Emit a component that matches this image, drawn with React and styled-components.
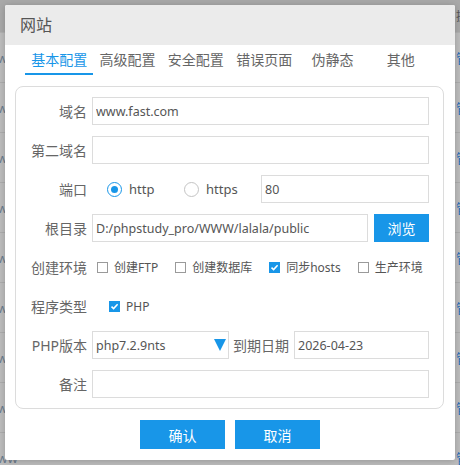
import React, { useState } from "react";
import styled, { createGlobalStyle } from "styled-components";

const BLUE = "#1896e8";

const GlobalStyle = createGlobalStyle`
  body {
    margin: 0;
    font-family: "Noto Sans", "Noto Sans CJK SC", sans-serif;
  }
  * { box-sizing: border-box; }
`;

const Backdrop = styled.div`
  position: relative;
  width: 460px;
  height: 465px;
  overflow: hidden;
  background: #bcbcbc;
`;

const TableHead = styled.div`
  height: 33px;
  background: #a8a8a8;
  border-bottom: 1px solid #b0b0b0;
  display: flex;
  justify-content: flex-end;
  align-items: center;
  span {
    font-size: 12px;
    color: #555;
    margin-right: -8px;
  }
`;

const TableRow = styled.div`
  height: 50px;
  border-bottom: 1px solid #acacac;
  display: flex;
  align-items: center;
  justify-content: space-between;
  font-size: 13px;
  .site {
    color: #6b7a8c;
    margin-left: -13px;
  }
  .act {
    color: #2a6fb8;
    margin-right: -9px;
  }
`;

const Dialog = styled.div`
  position: absolute;
  left: 5px;
  top: 5px;
  width: 450px;
  height: 455px;
  background: #fff;
  border-radius: 2px;
  box-shadow: 0 1px 6px rgba(0, 0, 0, 0.2);
  overflow: hidden;
`;

const Header = styled.div`
  height: 40px;
  line-height: 40px;
  padding-left: 15px;
  background: #ebebeb;
  font-size: 16px;
  color: #555;
`;

const Tabs = styled.div`
  display: flex;
  margin: 0 20px;
  height: 30px;
`;

const Tab = styled.div`
  flex: 1;
  text-align: center;
  font-size: 14px;
  line-height: 30px;
  color: ${(p) => (p.$active ? BLUE : "#666")};
  border-bottom: 2px solid ${(p) => (p.$active ? BLUE : "transparent")};
  cursor: pointer;
`;

const Panel = styled.div`
  margin: 11px 11px 0 10px;
  border: 1px solid #dcdcdc;
  border-radius: 8px;
  padding: 10px 14px 10px 0;
`;

const Row = styled.div`
  display: flex;
  align-items: center;
  height: 28px;
  margin-bottom: 11px;
  &:last-child { margin-bottom: 0; }
`;

const Label = styled.div`
  width: ${(p) => (p.$auto ? "auto" : "71px")};
  flex-shrink: 0;
  text-align: right;
  font-size: 14px;
  color: #666;
  margin-right: 5px;
  margin-left: ${(p) => p.$offset ?? 0}px;
  white-space: nowrap;
`;

const Input = styled.input`
  flex: 1;
  min-width: 0;
  height: 28px;
  border: 1px solid #dcdcdc;
  padding: 0 3px;
  font-family: inherit;
  font-size: 12.5px;
  color: #555;
  outline: none;
`;

const RadioGroup = styled.div`
  display: flex;
  margin-left: 15px;
`;

const RadioOption = styled.label`
  display: flex;
  align-items: center;
  width: 77px;
  font-size: 13px;
  color: #555;
  cursor: pointer;
`;

const RadioDot = styled.span`
  width: 15px;
  height: 15px;
  border-radius: 50%;
  border: 1px solid ${(p) => (p.$on ? BLUE : "#c4c4c4")};
  display: flex;
  align-items: center;
  justify-content: center;
  margin-right: 7px;
  &::after {
    content: "";
    width: 7px;
    height: 7px;
    border-radius: 50%;
    background: ${(p) => (p.$on ? BLUE : "transparent")};
  }
`;

const BlueButton = styled.button`
  width: ${(p) => p.$width}px;
  height: ${(p) => p.$height}px;
  flex-shrink: 0;
  margin-left: ${(p) => p.$ml ?? 0}px;
  border: none;
  background: ${BLUE};
  color: #fff;
  font-family: inherit;
  font-size: 14px;
  cursor: pointer;
`;

const CheckGroup = styled.div`
  display: flex;
  align-items: center;
  gap: 17px;
  margin-left: ${(p) => p.$offset}px;
`;

const CheckItem = styled.label`
  display: flex;
  align-items: center;
  font-size: 12px;
  color: #555;
  cursor: pointer;
  white-space: nowrap;
`;

const Box = styled.span`
  width: 11px;
  height: 11px;
  margin-right: 6px;
  border: 1px solid ${(p) => (p.$on ? BLUE : "#9a9a9a")};
  background: ${(p) => (p.$on ? BLUE : "#fff")};
  display: flex;
  align-items: center;
  justify-content: center;
`;

const Select = styled.div`
  width: 137px;
  height: 28px;
  flex-shrink: 0;
  border: 1px solid #dcdcdc;
  display: flex;
  align-items: center;
  justify-content: space-between;
  padding: 0 2px 0 3px;
  font-size: 12.5px;
  color: #555;
`;

const Caret = styled.span`
  width: 0;
  height: 0;
  border-left: 6px solid transparent;
  border-right: 6px solid transparent;
  border-top: 12px solid ${BLUE};
`;

const Footer = styled.div`
  display: flex;
  justify-content: center;
  gap: 10px;
  margin-top: 11px;
`;

const Check = ({ on, children, onClick }) => (
  <CheckItem onClick={onClick}>
    <Box $on={on}>
      {on && (
        <svg width="9" height="9" viewBox="0 0 9 9">
          <path d="M1.5 4.6 L3.6 6.6 L7.6 2.2" fill="none" stroke="#fff" strokeWidth="1.5" />
        </svg>
      )}
    </Box>
    {children}
  </CheckItem>
);

const tabs = ["基本配置", "高级配置", "安全配置", "错误页面", "伪静态", "其他"];

export default function App() {
  const [tab, setTab] = useState(0);
  const [proto, setProto] = useState("http");
  const [env, setEnv] = useState({ ftp: false, db: false, hosts: true, prod: false });
  const toggle = (k) => setEnv((e) => ({ ...e, [k]: !e[k] }));

  return (
    <>
      <GlobalStyle />
      <Backdrop>
        <TableHead><span>操</span></TableHead>
        {Array.from({ length: 9 }).map((_, i) => (
          <TableRow key={i}>
            <span className="site">www</span>
            <span className="act">管</span>
          </TableRow>
        ))}
        <Dialog>
          <Header>网站</Header>
          <Tabs>
            {tabs.map((t, i) => (
              <Tab key={t} $active={tab === i} onClick={() => setTab(i)}>{t}</Tab>
            ))}
          </Tabs>
          <Panel>
            <Row>
              <Label>域名</Label>
              <Input defaultValue="www.fast.com" />
            </Row>
            <Row>
              <Label>第二域名</Label>
              <Input />
            </Row>
            <Row>
              <Label>端口</Label>
              <RadioGroup>
                <RadioOption onClick={() => setProto("http")}>
                  <RadioDot $on={proto === "http"} />http
                </RadioOption>
                <RadioOption onClick={() => setProto("https")}>
                  <RadioDot $on={proto === "https"} />https
                </RadioOption>
              </RadioGroup>
              <Input defaultValue="80" />
            </Row>
            <Row>
              <Label>根目录</Label>
              <Input defaultValue="D:/phpstudy_pro/WWW/lalala/public" />
              <BlueButton $width={55} $height={28} $ml={6}>浏览</BlueButton>
            </Row>
            <Row>
              <Label>创建环境</Label>
              <CheckGroup $offset={5}>
                <Check on={env.ftp} onClick={() => toggle("ftp")}>创建FTP</Check>
                <Check on={env.db} onClick={() => toggle("db")}>创建数据库</Check>
                <Check on={env.hosts} onClick={() => toggle("hosts")}>同步hosts</Check>
                <Check on={env.prod} onClick={() => toggle("prod")}>生产环境</Check>
              </CheckGroup>
            </Row>
            <Row>
              <Label>程序类型</Label>
              <CheckGroup $offset={17}>
                <Check on>PHP</Check>
              </CheckGroup>
            </Row>
            <Row>
              <Label>PHP版本</Label>
              <Select>
                php7.2.9nts
                <Caret />
              </Select>
              <Label $auto $offset={4}>到期日期</Label>
              <Input defaultValue="2026-04-23" />
            </Row>
            <Row>
              <Label>备注</Label>
              <Input />
            </Row>
          </Panel>
          <Footer>
            <BlueButton $width={85} $height={29}>确认</BlueButton>
            <BlueButton $width={85} $height={29}>取消</BlueButton>
          </Footer>
        </Dialog>
      </Backdrop>
    </>
  );
}
